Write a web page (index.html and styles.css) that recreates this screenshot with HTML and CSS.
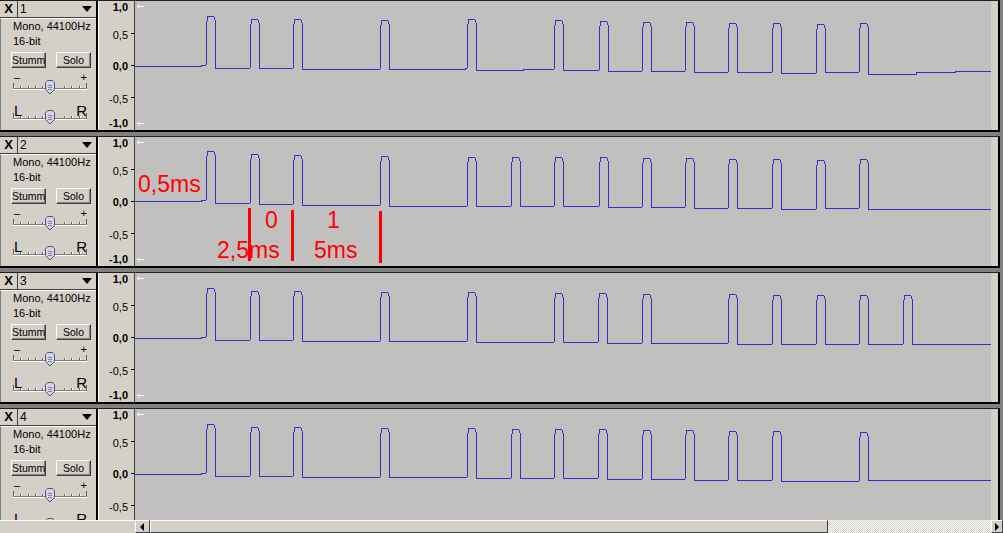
FILE: index.html
```html
<!DOCTYPE html>
<html lang="de">
<head>
    <meta charset="UTF-8">
    <title>Audacity - Spuren</title>
    <link rel="stylesheet" href="styles.css">
</head>
<body>
    <svg class="defs" width="0" height="0">
        <defs>
            <symbol id="sl" viewBox="0 0 76 15">
                <path d="M1,8.5 H75" stroke="#808080" />
                <path d="M1,9.5 H75" stroke="#fff" />
                <path d="M1.5,3 V8 M74.5,3 V8 M8.5,6 V8 M16.5,6 V8 M23.5,6 V8 M30.5,6 V8 M52.5,6 V8 M59.5,6 V8 M67.5,6 V8" stroke="#606060" />
                <path d="M2.5,6 V8 M9.5,6 V8 M17.5,6 V8 M24.5,6 V8 M31.5,6 V8 M53.5,6 V8 M60.5,6 V8 M68.5,6 V8" stroke="#fff" />
                <polygon points="33.5,2.5 35.5,0.5 40.5,0.5 42.5,2.5 42.5,9.5 38,14 33.5,9.5" fill="#d2d2e6" stroke="#55556e" />
                <path d="M36,5.5 H40 M36,7.5 H40 M36,9.5 H40" stroke="#8888a8" />
            </symbol>
            <symbol id="arr" viewBox="0 0 7 5">
                <path d="M0.5,2.5 H7 M2.5,0.5 L0.5,2.5 L2.5,4.5" stroke="#fff" fill="none" />
            </symbol>
        </defs>
    </svg>

    <div class="tracks">
        <!-- Spur 1 -->
        <div class="track">
            <div class="panel">
                <div class="titlebar"><span class="close">X</span><span class="name">1<i class="drop"></i></span></div>
                <div class="info">
                    <div class="fmt">Mono, 44100Hz</div>
                    <div class="fmt">16-bit</div>
                    <div class="btns"><span class="btn">Stumm</span><span class="btn">Solo</span></div>
                    <div class="slider gain"><div class="ends"><span>–</span><span>+</span></div><svg class="sl"><use href="#sl" /></svg></div>
                    <div class="slider pan"><div class="ends"><span>L</span><span>R</span></div><svg class="sl"><use href="#sl" /></svg></div>
                </div>
            </div>
            <div class="ruler">
                <span class="rl v10">1,0</span><span class="rl v05">0,5</span><span class="rl v00">0,0</span><span class="rl vm05">-0,5</span><span class="rl vm10">-1,0</span>
                <i class="tk t05"></i><i class="tk t00"></i><i class="tk tm05"></i>
            </div>
            <div class="wave">
                <svg width="856" height="129" viewBox="135 1 856 129">
                    <use href="#arr" x="137" y="4" width="7" height="5" />
                    <use href="#arr" x="137" y="121" width="7" height="5" />
                    <path class="sig" d="M135,66 H201 V65 H206 l1,-44 l1,-5 h5 l1,1 l1,3 V68 H250 l1,-44 l1,-5 h5 l1,1 l1,3 V68 H293 l1,-44 l1,-5 h5 l1,1 l1,3 V69 H380 l1,-44 l1,-5 h5 l1,1 l1,3 V69 H465 V68 H467 l1,-44 l1,-5 h5 l1,1 l1,3 V70 H523 V69 H554 l1,-44 l1,-5 h5 l1,1 l1,3 V70 H599 l1,-44 l1,-5 h5 l1,1 l1,3 V71 H642 l1,-44 l1,-5 h5 l1,1 l1,3 V71 H685 l1,-44 l1,-5 h5 l1,1 l1,3 V72 H728 l1,-44 l1,-5 h5 l1,1 l1,3 V72 H772 l1,-44 l1,-5 h5 l1,1 l1,3 V73 H816 l1,-44 l1,-5 h5 l1,1 l1,3 V72 H859 l1,-44 l1,-5 h5 l1,1 l1,3 V74 H916 V72 H955 V71 H991" />
                </svg>
            </div>
            <div class="strip"></div>
        </div>

        <!-- Spur 2, mit Anmerkungen -->
        <div class="track">
            <div class="panel">
                <div class="titlebar"><span class="close">X</span><span class="name">2<i class="drop"></i></span></div>
                <div class="info">
                    <div class="fmt">Mono, 44100Hz</div>
                    <div class="fmt">16-bit</div>
                    <div class="btns"><span class="btn">Stumm</span><span class="btn">Solo</span></div>
                    <div class="slider gain"><div class="ends"><span>–</span><span>+</span></div><svg class="sl"><use href="#sl" /></svg></div>
                    <div class="slider pan"><div class="ends"><span>L</span><span>R</span></div><svg class="sl"><use href="#sl" /></svg></div>
                </div>
            </div>
            <div class="ruler">
                <span class="rl v10">1,0</span><span class="rl v05">0,5</span><span class="rl v00">0,0</span><span class="rl vm05">-0,5</span><span class="rl vm10">-1,0</span>
                <i class="tk t05"></i><i class="tk t00"></i><i class="tk tm05"></i>
            </div>
            <div class="wave">
                <svg width="856" height="129" viewBox="135 1 856 129">
                    <use href="#arr" x="137" y="4" width="7" height="5" />
                    <use href="#arr" x="137" y="121" width="7" height="5" />
                    <path class="sig" d="M135,65 H201 V64 H206 l1,-44 l1,-5 h5 l1,1 l1,3 V67 H250 l1,-44 l1,-5 h5 l1,1 l1,3 V68 H293 l1,-44 l1,-5 h5 l1,1 l1,3 V69 H380 l1,-44 l1,-5 h5 l1,1 l1,3 V70 H467 l1,-44 l1,-5 h5 l1,1 l1,3 V70 H511 l1,-44 l1,-5 h5 l1,1 l1,3 V70 H554 l1,-44 l1,-5 h5 l1,1 l1,3 V70 H599 l1,-44 l1,-5 h5 l1,1 l1,3 V71 H642 l1,-44 l1,-5 h5 l1,1 l1,3 V71 H685 l1,-44 l1,-5 h5 l1,1 l1,3 V72 H728 l1,-44 l1,-5 h5 l1,1 l1,3 V72 H772 l1,-44 l1,-5 h5 l1,1 l1,3 V73 H816 l1,-44 l1,-5 h5 l1,1 l1,3 V72 H859 l1,-44 l1,-5 h5 l1,1 l1,3 V73 H991" />
                </svg>
                <span class="note n-half">0,5ms</span>
                <span class="note n-zero">0</span>
                <span class="note n-one">1</span>
                <span class="note n-25">2,5ms</span>
                <span class="note n-5">5ms</span>
                <i class="bar b1"></i><i class="bar b2"></i><i class="bar b3"></i>
            </div>
            <div class="strip"></div>
        </div>

        <!-- Spur 3 -->
        <div class="track">
            <div class="panel">
                <div class="titlebar"><span class="close">X</span><span class="name">3<i class="drop"></i></span></div>
                <div class="info">
                    <div class="fmt">Mono, 44100Hz</div>
                    <div class="fmt">16-bit</div>
                    <div class="btns"><span class="btn">Stumm</span><span class="btn">Solo</span></div>
                    <div class="slider gain"><div class="ends"><span>–</span><span>+</span></div><svg class="sl"><use href="#sl" /></svg></div>
                    <div class="slider pan"><div class="ends"><span>L</span><span>R</span></div><svg class="sl"><use href="#sl" /></svg></div>
                </div>
            </div>
            <div class="ruler">
                <span class="rl v10">1,0</span><span class="rl v05">0,5</span><span class="rl v00">0,0</span><span class="rl vm05">-0,5</span><span class="rl vm10">-1,0</span>
                <i class="tk t05"></i><i class="tk t00"></i><i class="tk tm05"></i>
            </div>
            <div class="wave">
                <svg width="856" height="129" viewBox="135 1 856 129">
                    <use href="#arr" x="137" y="4" width="7" height="5" />
                    <use href="#arr" x="137" y="121" width="7" height="5" />
                    <path class="sig" d="M135,66 H201 V65 H206 l1,-44 l1,-5 h5 l1,1 l1,3 V68 H250 l1,-44 l1,-5 h5 l1,1 l1,3 V68 H293 l1,-44 l1,-5 h5 l1,1 l1,3 V69 H380 l1,-44 l1,-5 h5 l1,1 l1,3 V69 H467 l1,-44 l1,-5 h5 l1,1 l1,3 V70 H554 l1,-44 l1,-5 h5 l1,1 l1,3 V70 H598 l1,-44 l1,-5 h5 l1,1 l1,3 V71 H642 l1,-44 l1,-5 h5 l1,1 l1,3 V71 H728 l1,-44 l1,-5 h5 l1,1 l1,3 V72 H772 l1,-44 l1,-5 h5 l1,1 l1,3 V72 H816 l1,-44 l1,-5 h5 l1,1 l1,3 V72 H859 l1,-44 l1,-5 h5 l1,1 l1,3 V72 H903 l1,-44 l1,-5 h5 l1,1 l1,3 V72 H991" />
                </svg>
            </div>
            <div class="strip"></div>
        </div>

        <!-- Spur 4 -->
        <div class="track">
            <div class="panel">
                <div class="titlebar"><span class="close">X</span><span class="name">4<i class="drop"></i></span></div>
                <div class="info">
                    <div class="fmt">Mono, 44100Hz</div>
                    <div class="fmt">16-bit</div>
                    <div class="btns"><span class="btn">Stumm</span><span class="btn">Solo</span></div>
                    <div class="slider gain"><div class="ends"><span>–</span><span>+</span></div><svg class="sl"><use href="#sl" /></svg></div>
                    <div class="slider pan"><div class="ends"><span>L</span><span>R</span></div><svg class="sl"><use href="#sl" /></svg></div>
                </div>
            </div>
            <div class="ruler">
                <span class="rl v10">1,0</span><span class="rl v05">0,5</span><span class="rl v00">0,0</span><span class="rl vm05">-0,5</span><span class="rl vm10">-1,0</span>
                <i class="tk t05"></i><i class="tk t00"></i><i class="tk tm05"></i>
            </div>
            <div class="wave">
                <svg width="856" height="129" viewBox="135 1 856 129">
                    <use href="#arr" x="137" y="4" width="7" height="5" />
                    <path class="sig" d="M135,66 H201 V65 H206 l1,-44 l1,-5 h5 l1,1 l1,3 V68 H250 l1,-44 l1,-5 h5 l1,1 l1,3 V68 H293 l1,-44 l1,-5 h5 l1,1 l1,3 V69 H380 l1,-44 l1,-5 h5 l1,1 l1,3 V69 H467 l1,-44 l1,-5 h5 l1,1 l1,3 V70 H511 l1,-44 l1,-5 h5 l1,1 l1,3 V70 H554 l1,-44 l1,-5 h5 l1,1 l1,3 V70 H598 l1,-44 l1,-5 h5 l1,1 l1,3 V71 H642 l1,-44 l1,-5 h5 l1,1 l1,3 V71 H685 l1,-44 l1,-5 h5 l1,1 l1,3 V72 H728 l1,-44 l1,-5 h5 l1,1 l1,3 V72 H772 l1,-44 l1,-5 h5 l1,1 l1,3 V73 H859 l1,-44 l1,-5 h5 l1,1 l1,3 V72 H991" />
                </svg>
            </div>
            <div class="strip"></div>
        </div>
    </div>

    <div class="hscroll">
        <div class="hs-left"></div>
        <div class="hs-btn"><i class="tri-l"></i></div>
        <div class="hs-thumb"></div>
        <div class="hs-track"></div>
        <div class="hs-btn hs-right"><i class="tri-r"></i></div>
    </div>
</body>
</html>
```

FILE: styles.css
```css
body {
    margin: 0;
    width: 1003px;
    height: 533px;
    overflow: hidden;
    background: #808080;
    font-family: "Liberation Sans", Arial, sans-serif;
    font-size: 11px;
    color: #000;
}

.defs {
    position: absolute;
}

.tracks {
    height: 520px;
    overflow: hidden;
}

.track {
    display: flex;
    width: 1000px;
    height: 132px;
    box-sizing: border-box;
    border-top: 1px solid #202020;
    border-bottom: 2px solid #000;
    border-right: 2px solid #000;
    margin-bottom: 4px;
    background: #d4d0c8;
}

/* label panel on the left */
.panel {
    width: 97px;
    border-right: 2px solid #000;
    display: flex;
    flex-direction: column;
}

.titlebar {
    display: flex;
    height: 17px;
    box-sizing: border-box;
    border-bottom: 1px solid #404040;
}

.close {
    width: 18px;
    box-sizing: border-box;
    border-right: 1px solid #404040;
    font-weight: bold;
    font-size: 13px;
    line-height: 16px;
    text-align: center;
}

.name {
    flex: 1;
    position: relative;
    padding-left: 2px;
    font-size: 12px;
    line-height: 16px;
}

.drop {
    position: absolute;
    right: 4px;
    top: 5px;
    border-left: 5px solid transparent;
    border-right: 5px solid transparent;
    border-top: 6px solid #000;
}

.info {
    flex: 1;
    border-left: 1px solid #808080;
    border-top: 1px solid #fff;
    padding-left: 12px;
}

.fmt {
    line-height: 15px;
}

.btns {
    display: flex;
    gap: 10px;
    margin-top: 3px;
    margin-left: -2px;
}

.btn {
    width: 35px;
    height: 16px;
    box-sizing: border-box;
    border: 1px solid;
    border-color: #fff #404040 #404040 #fff;
    box-shadow: inset -1px -1px #808080;
    text-align: center;
    line-height: 14px;
    font-size: 10.5px;
}

.slider {
    width: 76px;
}

.slider .ends {
    display: flex;
    justify-content: space-between;
    padding: 0 2px 0 1px;
}

.gain {
    margin-top: 4px;
}

.gain .ends {
    line-height: 10px;
}

.pan {
    margin-top: 8px;
}

.pan .ends {
    font-size: 15px;
    line-height: 15px;
}

.sl {
    display: block;
    width: 76px;
    height: 15px;
    margin-left: -1px;
}

.gain .sl {
    margin-top: -2px;
}

.pan .sl {
    margin-top: -8px;
}

/* vertical amplitude ruler */
.ruler {
    width: 35px;
    position: relative;
    border-right: 1px solid #404040;
    border-left: 1px solid #fff;
}

.rl {
    position: absolute;
    right: 6px;
    line-height: 12px;
}

.v10, .v00, .vm10 {
    font-weight: bold;
}

.v10 { top: 0; }
.v05 { top: 28px; }
.v00 { top: 59px; }
.vm05 { top: 92px; }
.vm10 { top: 116px; }

.tk {
    position: absolute;
    right: 0;
    width: 3px;
    height: 1px;
    background: #000;
}

.t05 { top: 32px; }
.t00 { top: 64px; }
.tm05 { top: 96px; }

/* waveform */
.wave {
    width: 856px;
    position: relative;
    background: #c2bfbf;
}

.wave svg {
    display: block;
}

.sig {
    fill: none;
    stroke: #3232c8;
    stroke-width: 1;
    shape-rendering: crispEdges;
}

.strip {
    width: 7px;
    background: #d4d0c8;
}

/* red annotations in track 2 */
.note {
    position: absolute;
    color: #f00;
    font-size: 23px;
    line-height: 23px;
}

.n-half { left: 3px; top: 36px; }
.n-zero { left: 130px; top: 72px; }
.n-one { left: 192px; top: 72px; }
.n-25 { left: 82px; top: 102px; }
.n-5 { left: 179px; top: 102px; }

.bar {
    position: absolute;
    width: 3px;
    background: #f00;
}

.b1 { left: 113px; top: 71px; height: 53px; }
.b2 { left: 156px; top: 73px; height: 51px; }
.b3 { left: 244px; top: 74px; height: 52px; }

/* horizontal scrollbar */
.hscroll {
    display: flex;
    height: 13px;
    background: #d4d0c8;
}

.hs-left {
    width: 135px;
    border-top: 1px solid #fff;
}

.hs-btn {
    width: 15px;
    box-sizing: border-box;
    border: 1px solid;
    border-color: #fff #404040 #404040 #fff;
    position: relative;
}

.hs-right {
    width: 12px;
}

.tri-l, .tri-r {
    position: absolute;
    top: 2px;
    border-top: 4px solid transparent;
    border-bottom: 4px solid transparent;
}

.tri-l {
    left: 4px;
    border-right: 4px solid #000;
}

.tri-r {
    left: 3px;
    border-left: 4px solid #000;
}

.hs-thumb {
    width: 678px;
    box-sizing: border-box;
    border: 1px solid;
    border-color: #fff #404040 #404040 #fff;
}

.hs-track {
    flex: 1;
    background: repeating-conic-gradient(#fff 0 25%, #d4d0c8 0 50%) 0 0 / 2px 2px;
}
```
